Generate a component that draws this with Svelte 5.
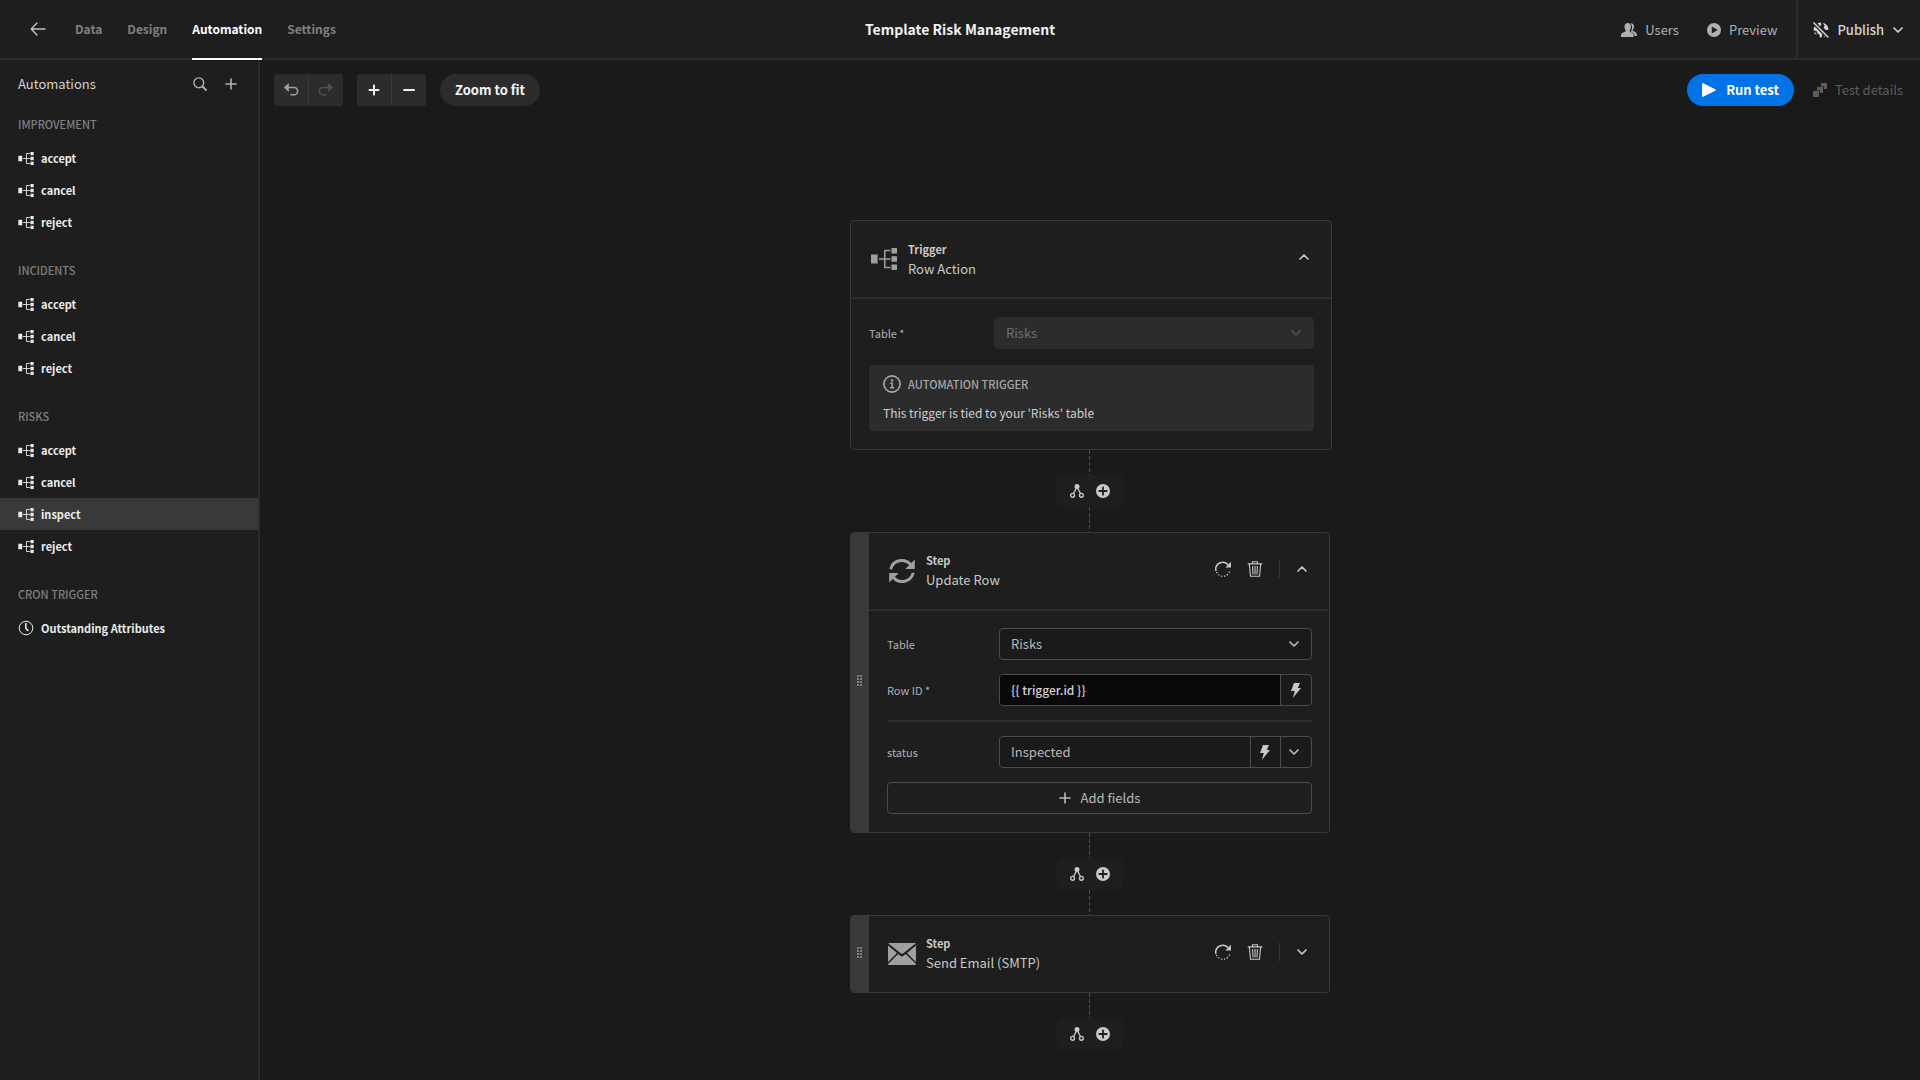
<script>
  const groups = [
    { name: 'IMPROVEMENT', icon: 'tree', items: ['accept', 'cancel', 'reject'] },
    { name: 'INCIDENTS', icon: 'tree', items: ['accept', 'cancel', 'reject'] },
    { name: 'RISKS', icon: 'tree', items: ['accept', 'cancel', 'inspect', 'reject'] },
    { name: 'CRON TRIGGER', icon: 'clock', items: ['Outstanding Attributes'] }
  ];
  let selected = $state('RISKS/inspect');
  let rowId = $state('{{ trigger.id }}');
</script>

{#snippet tree(cls)}
  <svg class={cls} viewBox="0 0 26 22" aria-hidden="true">
    <path fill="currentColor" d="M0 6.5h6.6v9H0zM20.5 0H26v5.5h-5.5zM20.5 8.2H26v5.6h-5.6zM20.5 16.5H26V22h-5.5z" />
    <path fill="none" stroke="currentColor" stroke-width="1.5" d="M8 11h11.5M19.5 2.5h-5.7v17h5.7" />
  </svg>
{/snippet}

{#snippet chevron(up)}
  <svg class="i12" viewBox="0 0 12 12" aria-hidden="true">
    <path fill="none" stroke="currentColor" stroke-width="1.7" stroke-linecap="round" stroke-linejoin="round" d={up ? 'M2 8l4-4 4 4' : 'M2 4l4 4 4-4'} />
  </svg>
{/snippet}

{#snippet plus(cls)}
  <svg class={cls} viewBox="0 0 12 12" aria-hidden="true">
    <path fill="none" stroke="currentColor" stroke-width="1.6" stroke-linecap="round" d="M6 1v10M1 6h10" />
  </svg>
{/snippet}

{#snippet bolt()}
  <svg class="bolt" viewBox="0 0 10 15" aria-hidden="true">
    <path fill="currentColor" d="M3 0h6L6.8 5H10L1.8 15l2-7H0z" />
  </svg>
{/snippet}

{#snippet connector(last)}
  <div class="connector">
    <span class="dash"></span>
    <div class="adder">
      <button class="bare" aria-label="Add branch">
        <svg class="i14" viewBox="0 0 14 14" aria-hidden="true">
          <circle cx="7" cy="2.5" r="2.5" fill="currentColor" />
          <path fill="none" stroke="currentColor" stroke-width="1.4" d="M7 3L3.5 9.5M7 3l3.5 6.5" />
          <circle cx="2.6" cy="11.3" r="1.9" fill="none" stroke="currentColor" stroke-width="1.4" />
          <circle cx="11.4" cy="11.3" r="1.9" fill="none" stroke="currentColor" stroke-width="1.4" />
        </svg>
      </button>
      <button class="bare" aria-label="Add step">
        <svg class="i14" viewBox="0 0 14 14" aria-hidden="true">
          <circle cx="7" cy="7" r="7" fill="currentColor" />
          <path stroke="#1e1e1e" stroke-width="1.8" stroke-linecap="round" d="M7 3.3v7.4M3.3 7h7.4" />
        </svg>
      </button>
    </div>
    {#if !last}<span class="dash"></span>{/if}
  </div>
{/snippet}

{#snippet handle()}
  <div class="handle">
    <svg class="grip" viewBox="0 0 5 11" aria-hidden="true">
      <path fill="currentColor" d="M0 0h2v2H0zM3 0h2v2H3zM0 3h2v2H0zM3 3h2v2H3zM0 6h2v2H0zM3 6h2v2H3zM0 9h2v2H0zM3 9h2v2H3z" />
    </svg>
  </div>
{/snippet}

{#snippet stepActions(up)}
  <div class="actions">
    <button class="bare" aria-label="Reset step">
      <svg class="i16" viewBox="0 0 16 16" aria-hidden="true">
        <path fill="none" stroke="currentColor" stroke-width="1.5" d="M1 10A7 7 0 0 1 13.3 4" />
        <path fill="currentColor" d="M16 .8V6.5h-5.7z" />
        <path fill="none" stroke="currentColor" stroke-width="1.2" stroke-dasharray="1.4 1.6" d="M1.5 11A7 7 0 0 0 14.9 9" />
      </svg>
    </button>
    <button class="bare" aria-label="Delete step">
      <svg class="i16" viewBox="0 0 16 16" aria-hidden="true">
        <path fill="none" stroke="currentColor" stroke-width="1.1" d="M.7 2.9h14.6M5.5 2.5V.7h5v1.8M2.3 3l1.2 12.3h9L13.7 3M5.6 5l.4 8.5M8 5v8.5M10.4 5l-.4 8.5" />
      </svg>
    </button>
    <span class="rule"></span>
    <button class="bare" aria-label="Toggle step">{@render chevron(up)}</button>
  </div>
{/snippet}

<div class="app">
  <header class="top">
    <nav class="tabs">
      <a class="back" href="#apps" aria-label="Back">
        <svg class="i16" viewBox="0 0 16 16" aria-hidden="true">
          <path fill="none" stroke="currentColor" stroke-width="1.4" stroke-linecap="round" stroke-linejoin="round" d="M15 8H1.2M7 2L1.2 8 7 14" />
        </svg>
      </a>
      <a href="#data">Data</a>
      <a href="#design">Design</a>
      <a href="#automation" class="active">Automation</a>
      <a href="#settings">Settings</a>
    </nav>
    <h1>Template Risk Management</h1>
    <div class="tools">
      <button class="tool">
        <svg class="i16" viewBox="0 0 16 14" aria-hidden="true">
          <path fill="currentColor" d="M6.8 0c2 0 3.2 1.5 3.2 3.6 0 1.5-.5 2.9-1.3 3.7v1.2c1.5.7 4 1.5 4 3.7V14H0v-1.8c0-2.2 2.8-3 4.6-3.7V7.3C3.9 6.5 3.5 5.1 3.5 3.6 3.5 1.5 4.8 0 6.8 0z" />
          <path fill="currentColor" d="M10 .2c1.9 0 3 1.4 3 3.3 0 1.4-.4 2.5-1.2 3.3v1.2c1.4.6 4.2 1.5 4.2 4V13h-2.3c-.2-2.4-2-3.7-3.8-4.5 1.5-2 1.7-6-.4-8.2z" />
        </svg>
        Users
      </button>
      <button class="tool">
        <svg class="i14" viewBox="0 0 14 14" aria-hidden="true">
          <path fill="currentColor" fill-rule="evenodd" d="M7 0a7 7 0 1 1 0 14A7 7 0 0 1 7 0zM4.8 3.4v7.2L10.7 7z" />
        </svg>
        Preview
      </button>
      <button class="tool publish">
        <svg class="i16" viewBox="0 0 16 16" aria-hidden="true">
          <path fill="currentColor" d="M4.5 1.300Q6 .5 8 .5L8.300 3 7 4.200zM9.800.7q5.400 1.600 5.700 7L12.500 8l-2-2.500 1.200-1.800zM1.600 4.200L9.500 12 8.500 15.500 6.800 15.400 6.500 12.500 4.500 11.500 3.500 9 .5 8.500Q.4 6.200 1.600 4.200zM11.500 13.600l1 .9q-1.200.8-2 .9zM.8 10l2 1 1 2.300Q1.500 12 .8 10z" />
          <path stroke="#1e1e1e" stroke-width="3.6" d="M0 0l16 16" />
          <path stroke="currentColor" stroke-width="1.5" stroke-linecap="round" d="M1 1l14 14" />
        </svg>
        Publish
        {@render chevron(false)}
      </button>
    </div>
  </header>

  <div class="main">
    <aside>
      <div class="side-head">
        <h2>Automations</h2>
        <button class="bare" aria-label="Search">
          <svg class="i14" viewBox="0 0 14 14" aria-hidden="true">
            <circle cx="5.8" cy="5.8" r="4.9" fill="none" stroke="currentColor" stroke-width="1.4" />
            <path stroke="currentColor" stroke-width="1.8" stroke-linecap="round" d="M9.5 9.5L13 13" />
          </svg>
        </button>
        <button class="bare" aria-label="Add automation">{@render plus('i12')}</button>
      </div>
      {#each groups as group}
        <section>
          <h3>{group.name}</h3>
          {#each group.items as item}
            <button class="item" class:selected={selected === group.name + '/' + item} onclick={() => (selected = group.name + '/' + item)}>
              {#if group.icon === 'tree'}
                {@render tree('tree-small')}
              {:else}
                <svg class="i16" viewBox="0 0 16 16" aria-hidden="true">
                  <circle cx="8" cy="8" r="6.8" fill="none" stroke="currentColor" stroke-width="1" />
                  <path fill="none" stroke="currentColor" stroke-width="1.5" d="M7.8 3v5.3l2.6 2.6" />
                </svg>
              {/if}
              {item}
            </button>
          {/each}
        </section>
      {/each}
    </aside>

    <main>
      <div class="toolbar">
        <div class="pair">
          <button aria-label="Undo" class="muted">
            <svg class="i16" viewBox="0 0 16 16" aria-hidden="true">
              <path fill="none" stroke="currentColor" stroke-width="1.6" stroke-linecap="round" d="M4 5.5h7a3.6 3.6 0 0 1 0 7.3H8" />
              <path fill="currentColor" d="M5.8 1v9L.8 5.5z" />
            </svg>
          </button>
          <button aria-label="Redo" disabled>
            <svg class="i16" viewBox="0 0 16 16" aria-hidden="true">
              <path fill="none" stroke="currentColor" stroke-width="1.6" stroke-linecap="round" d="M12 5.5H5a3.6 3.6 0 0 0 0 7.3H8" />
              <path fill="currentColor" d="M10.2 1v9l5-4.5z" />
            </svg>
          </button>
        </div>
        <div class="pair">
          <button aria-label="Zoom in">
            <svg class="i12" viewBox="0 0 12 12" aria-hidden="true"><path stroke="currentColor" stroke-width="2" stroke-linecap="round" d="M6 1.5v9M1.5 6h9" /></svg>
          </button>
          <button aria-label="Zoom out">
            <svg class="i12" viewBox="0 0 12 12" aria-hidden="true"><path stroke="currentColor" stroke-width="2" stroke-linecap="round" d="M1 6h10" /></svg>
          </button>
        </div>
        <button class="pill">Zoom to fit</button>
        <div class="spacer"></div>
        <button class="pill run">
          <svg class="i14" viewBox="0 0 14 14" aria-hidden="true"><path fill="currentColor" d="M0 1q0-1.2 1.2-.7L13.3 6.3q.9.7 0 1.4L1.2 13.7Q0 14.2 0 13z" /></svg>
          Run test
        </button>
        <button class="details" disabled>
          <svg class="i14" viewBox="0 0 14 14" aria-hidden="true">
            <path fill="currentColor" d="M8 0h6v6h-3V3.5H8zM4 4h6v6H7V7.5H4zM0 8h6v6H0z" />
          </svg>
          Test details
        </button>
      </div>

      <div class="flow">
        <article class="card trigger">
          <div class="card-main">
            <div class="card-head">
              {@render tree('tree-large')}
              <div class="titles">
                <strong>Trigger</strong>
                <span>Row Action</span>
              </div>
              <div class="actions">
                <button class="bare" aria-label="Toggle trigger">{@render chevron(true)}</button>
              </div>
            </div>
            <div class="card-body">
              <div class="field">
                <label for="trigger-table">Table *</label>
                <div class="select-box off">
                  <select id="trigger-table" disabled><option>Risks</option></select>
                  <span class="arrow">{@render chevron(false)}</span>
                </div>
              </div>
              <div class="info">
                <div class="info-head">
                  <svg class="i18" viewBox="0 0 18 18" aria-hidden="true">
                    <circle cx="9" cy="9" r="8.1" fill="none" stroke="currentColor" stroke-width="1.6" />
                    <circle cx="9" cy="5.4" r="1.2" fill="currentColor" />
                    <path fill="none" stroke="currentColor" stroke-width="1.5" d="M7.3 8.2H9.2V12.6M7 12.7h4.2" />
                  </svg>
                  AUTOMATION TRIGGER
                </div>
                <p>This trigger is tied to your 'Risks' table</p>
              </div>
            </div>
          </div>
        </article>

        {@render connector(false)}

        <article class="card">
          {@render handle()}
          <div class="card-main">
            <div class="card-head">
              <svg class="i28" viewBox="0 0 28 28" aria-hidden="true">
                <path fill="none" stroke="currentColor" stroke-width="3" d="M2.8 12.2A11.2 10.8 0 0 1 22.5 7.5M25.2 15.8A11.2 10.8 0 0 1 5.5 20.5" />
                <path fill="currentColor" d="M26.8 2.5V12h-9.5zM1.2 25.5V16h9.5z" />
              </svg>
              <div class="titles">
                <strong>Step</strong>
                <span>Update Row</span>
              </div>
              {@render stepActions(true)}
            </div>
            <div class="card-body">
              <div class="field">
                <label for="step-table">Table</label>
                <div class="select-box">
                  <select id="step-table"><option>Risks</option></select>
                  <span class="arrow">{@render chevron(false)}</span>
                </div>
              </div>
              <div class="field">
                <label for="row-id">Row ID *</label>
                <div class="box">
                  <input id="row-id" class="code" type="text" bind:value={rowId} />
                  <button class="cell" aria-label="Bind row ID">{@render bolt()}</button>
                </div>
              </div>
              <hr />
              <div class="field">
                <label for="status">status</label>
                <div class="box">
                  <input id="status" type="text" value="Inspected" />
                  <button class="cell narrow" aria-label="Bind status">{@render bolt()}</button>
                  <button class="cell menu" aria-label="Choose status">{@render chevron(false)}</button>
                </div>
              </div>
              <button class="add">{@render plus('i12')} Add fields</button>
            </div>
          </div>
        </article>

        {@render connector(false)}

        <article class="card">
          {@render handle()}
          <div class="card-main">
            <div class="card-head">
              <svg class="i28" viewBox="0 0 28 28" aria-hidden="true">
                <path fill="currentColor" d="M1 3h26q1 0 .6.6L15 13.5q-1 .7-2 0L.4 3.6Q0 3 1 3zM0 5.5L9 13 0 22zM28 5.5L19 13l9 9zM10.2 14l2.2 1.8q1.6 1.2 3.2 0L17.8 14 28 24q0 1-1 1H1q-1 0-1-1z" />
              </svg>
              <div class="titles">
                <strong>Step</strong>
                <span>Send Email (SMTP)</span>
              </div>
              {@render stepActions(false)}
            </div>
          </div>
        </article>

        {@render connector(true)}
      </div>
    </main>
  </div>
</div>

<style>
  :global(body) {
    margin: 0;
    background: #1a1a1a;
  }
  .app {
    min-height: 100vh;
    display: flex;
    flex-direction: column;
    font-family: 'Noto Sans CJK SC', 'Noto Sans', sans-serif;
    font-size: 13px;
    line-height: 20px;
    color: #c8c8c8;
    background: #1a1a1a;
  }
  button, input, select {
    font: inherit;
    color: inherit;
    background: none;
    border: 0;
    margin: 0;
    padding: 0;
  }
  button { cursor: pointer; }
  svg { display: block; flex: none; }
  h1, h2, h3, p { margin: 0; font-weight: 400; }
  .i12 { width: 12px; height: 12px; }
  .i14 { width: 14px; height: 14px; }
  .i16 { width: 16px; height: 16px; }
  .i18 { width: 18px; height: 18px; }
  .i28 { width: 28px; height: 28px; }
  .bare { display: flex; align-items: center; justify-content: center; }

  .top {
    display: grid;
    grid-template-columns: 1fr auto 1fr;
    height: 58px;
    border-bottom: 2px solid #2c2c2c;
    background: #1e1e1e;
  }
  .tabs {
    display: flex;
    gap: 25px;
    padding-left: 30px;
  }
  .tabs a {
    display: flex;
    align-items: center;
    height: 58px;
    border-bottom: 2px solid transparent;
    color: #808080;
    font-size: 12px;
    font-weight: 700;
    text-decoration: none;
  }
  .tabs .back { color: #c0c0c0; margin-right: 4px; }
  .tabs .active { color: #fff; border-color: #fff; }
  .top h1 {
    align-self: center;
    padding-bottom: 2px;
    font-size: 14px;
    font-weight: 700;
    color: #f0f0f0;
  }
  .tools { display: flex; justify-content: flex-end; }
  .tool {
    display: flex;
    align-items: center;
    gap: 8px;
    margin-right: 28px;
    color: #b0b0b0;
  }
  .tool + .tool { margin-right: 19px; }
  .tool.tool.publish {
    margin-right: 0;
    padding: 0 16px 0 15px;
    border-left: 2px solid #2c2c2c;
    color: #d4d4d4;
    font-weight: 500;
  }

  .main { display: flex; flex: 1; }
  aside {
    box-sizing: border-box;
    width: 260px;
    border-right: 2px solid #2c2c2c;
    background: #1e1e1e;
  }
  .side-head {
    display: flex;
    align-items: center;
    padding: 14px 21px 12px 18px;
    gap: 18px;
    color: #b0b0b0;
  }
  .side-head h2 { flex: 1; font-size: 13px; color: #d0d0d0; }
  section { padding-bottom: 14px; }
  section h3 {
    padding: 8px 18px;
    font-size: 11px;
    line-height: 20px;
    color: #808080;
    font-weight: 500;
  }
  .item {
    display: flex;
    align-items: center;
    gap: 7px;
    width: 100%;
    height: 32px;
    padding: 0 18px;
    font-size: 11px;
    font-weight: 700;
    color: #ececec;
  }
  .item.selected { background: #393939; }
  .item :global(.tree-small) { width: 16px; height: 13px; }

  main { flex: 1; min-width: 0; }
  .toolbar {
    display: flex;
    align-items: center;
    gap: 14px;
    padding: 14px 17px 0 14px;
  }
  .pair { display: flex; gap: 1px; border-radius: 4px; overflow: hidden; background: #393939; }
  .pair button {
    display: flex;
    align-items: center;
    justify-content: center;
    width: 34px;
    height: 32px;
    background: #2c2c2c;
    color: #f0f0f0;
  }
  .pair .muted { color: #a0a0a0; }
  .pair button:disabled { color: #505050; }
  .pill {
    display: flex;
    align-items: center;
    gap: 10px;
    height: 32px;
    padding: 0 15px;
    border-radius: 16px;
    background: #2c2c2c;
    color: #f4f4f4;
    font-weight: 700;
  }
  .run { background: #0073e6; color: #fff; }
  .spacer { flex: 1; }
  .details { display: flex; align-items: center; gap: 8px; margin-left: 5px; color: #5c5c5c; }

  .flow {
    width: 480px;
    margin: 114px auto 30px;
  }
  .card {
    display: flex;
    box-sizing: border-box;
    width: 480px;
    border: 1px solid #393939;
    border-radius: 4px;
    overflow: hidden;
    background: #1e1e1e;
  }
  .card.trigger { width: 482px; }
  .card-main { flex: 1; }
  .handle {
    display: flex;
    align-items: center;
    justify-content: center;
    box-sizing: border-box;
    width: 18px;
    padding: 0 2px 4px 0;
    background: #393939;
    color: #808080;
  }
  .grip { width: 5px; height: 11px; }
  .card-head {
    display: flex;
    align-items: center;
    height: 76px;
    box-sizing: border-box;
    padding: 0 21px 0 19px;
    gap: 10px;
    color: #a0a0a0;
  }
  .trigger .card-head { padding-left: 20px; gap: 11px; }
  .card-head :global(.tree-large) { width: 26px; height: 22px; }
  .titles { flex: 1; display: flex; flex-direction: column; padding-bottom: 2px; color: #c8c8c8; }
  .trigger .titles { padding-bottom: 0; }
  .titles strong { font-size: 11px; }
  .actions { display: flex; align-items: center; gap: 16px; padding-bottom: 4px; color: #c8c8c8; }
  .rule { width: 1px; height: 18px; background: #393939; }
  .card-body {
    display: flex;
    flex-direction: column;
    gap: 14px;
    padding: 17px 17px 18px 18px;
    border-top: 2px solid #2c2c2c;
  }
  .trigger .card-body { gap: 16px; padding: 18px 17px 18px 18px; }
  .field { display: grid; grid-template-columns: 112px 1fr; align-items: center; }
  .trigger .field { grid-template-columns: 125px 1fr; }
  label { font-size: 11px; color: #b0b0b0; }
  .box, .select-box {
    box-sizing: border-box;
    display: flex;
    height: 32px;
    border: 1px solid #4c4c4c;
    border-radius: 4px;
    overflow: hidden;
    background: #1a1a1a;
    color: #b8b8b8;
  }
  .select-box { display: grid; align-items: center; }
  select {
    grid-area: 1 / 1;
    appearance: none;
    height: 30px;
    padding: 0 11px;
    opacity: 1;
  }
  .arrow { grid-area: 1 / 1; justify-self: end; margin-right: 11px; pointer-events: none; }
  .off { background: #2c2c2c; border-color: #2c2c2c; color: #6e6e6e; }
  .off .arrow { color: #505050; }
  input { flex: 1; min-width: 0; padding: 0 11px; }
  input.code { background: #080808; color: #d0d0d0; font-size: 12px; font-weight: 500; }
  .cell {
    display: flex;
    align-items: center;
    justify-content: center;
    box-sizing: border-box;
    width: 31px;
    padding-right: 1px;
    border-left: 1px solid #4c4c4c;
    color: #c8c8c8;
  }
  .cell.narrow { width: 30px; }
  .cell.menu { padding-right: 5px; color: #b8b8b8; }
  .cell :global(.bolt) { width: 10px; height: 15px; }
  hr { width: 100%; height: 2px; margin: 0; border: 0; background: #2c2c2c; }
  .add {
    display: flex;
    align-items: center;
    justify-content: center;
    gap: 10px;
    height: 32px;
    border: 1px solid #4c4c4c;
    border-radius: 4px;
    color: #b8b8b8;
  }
  .info {
    padding: 10px 14px 8px;
    border-radius: 4px;
    background: #2c2c2c;
  }
  .info-head {
    display: flex;
    align-items: center;
    gap: 7px;
    height: 18px;
    font-size: 11px;
    font-weight: 500;
    color: #a8a8a8;
  }
  .info p { margin-top: 10px; font-size: 12px; color: #d0d0d0; }
  .connector { display: flex; flex-direction: column; align-items: center; }
  .dash {
    width: 2px;
    height: 25px;
    background: repeating-linear-gradient(#4c4c4c 0 4px, transparent 4px 6px) 0 0 / 1px 100% no-repeat;
  }
  .adder {
    display: flex;
    align-items: center;
    gap: 12px;
    height: 32px;
    padding: 0 13px;
    border-radius: 4px;
    background: #1e1e1e;
    color: #c8c8c8;
  }
</style>
